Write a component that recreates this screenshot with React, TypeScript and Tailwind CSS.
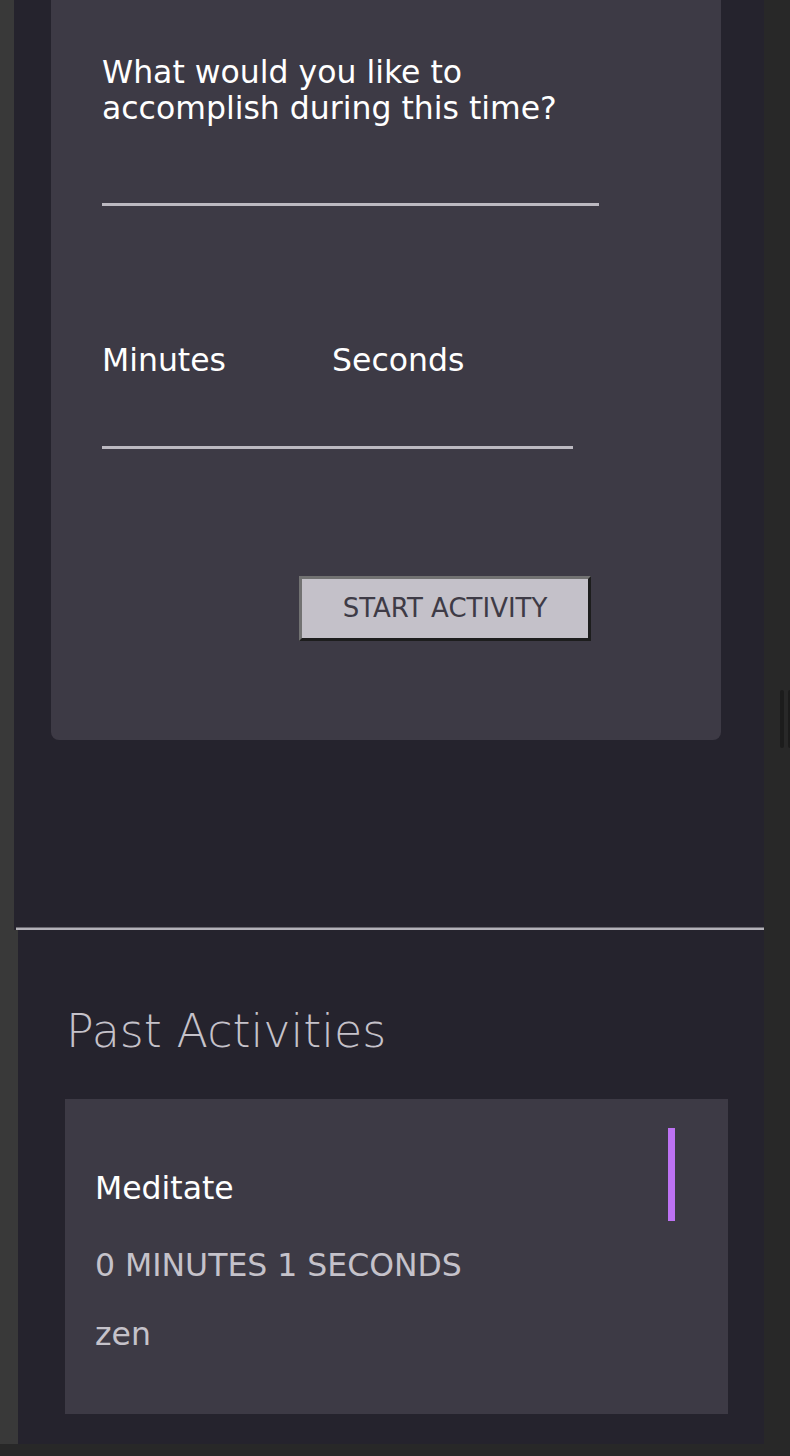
import React, { useState } from 'react';

const font = { fontFamily: '"DejaVu Sans", "Liberation Sans", sans-serif' };

const App: React.FC = () => {
  const [goal, setGoal] = useState('');
  const [minutes, setMinutes] = useState('');
  const [seconds, setSeconds] = useState('');

  return (
    <div className="h-[1456px] bg-[#282828] flex flex-col overflow-hidden" style={font}>
      <div className="flex h-[1444px]">
        {/* left gutter */}
        <div className="w-[14px] bg-[#393939]" />

        <main className="w-[750px] bg-[#25232d] flex flex-col">
          {/* New activity form */}
          <section className="h-[927px] pl-[37px]">
            <div className="w-[670px] h-[740px] bg-[#3d3a45] rounded-b-lg pl-[51px] pt-[54px]">
              <label className="block text-[31.5px] leading-[36px] text-white">
                What would you like to
                <br />
                accomplish during this time?
              </label>
              <input
                className="block mt-[36px] w-[497px] h-[44px] bg-transparent border-b-[3px] border-[#bcb9c1] outline-none text-white text-[28px]"
                value={goal}
                onChange={(e) => setGoal(e.target.value)}
              />

              <div className="flex mt-[136px]">
                <div className="w-[230px]">
                  <label className="block text-[31.5px] leading-[36px] text-white">Minutes</label>
                  <input
                    className="block mt-[27px] w-full h-[44px] bg-transparent border-b-[3px] border-[#bcb9c1] outline-none text-white text-[28px]"
                    value={minutes}
                    onChange={(e) => setMinutes(e.target.value)}
                  />
                </div>
                <div className="w-[241px]">
                  <label className="block text-[31.5px] leading-[36px] text-white">Seconds</label>
                  <input
                    className="block mt-[27px] w-full h-[44px] bg-transparent border-b-[3px] border-[#bcb9c1] outline-none text-white text-[28px]"
                    value={seconds}
                    onChange={(e) => setSeconds(e.target.value)}
                  />
                </div>
              </div>

              <button className="block mt-[127px] ml-[197px] w-[292px] h-[65px] bg-[#c4c1c9] border-[3px] border-t-[#727272] border-l-[#727272] border-b-[#1d1d1d] border-r-[#1d1d1d] text-[26px] text-[#3e3b46] uppercase">
                Start Activity
              </button>
            </div>
          </section>

          {/* divider */}
          <div className="ml-[2px] h-[3px] border-t border-[#6c6a72] bg-[#b3b1b8]" />

          {/* Past activities */}
          <section className="flex-1 border-l-4 border-[#393939] pl-[47px] pt-[73px]">
            <h2 className="text-[46px] leading-[56px] font-extralight text-[#c5c2ca] pl-px">Past Activities</h2>

            <div className="mt-[40px] w-[663px] h-[315px] bg-[#3d3a45] pl-[30px] pt-[29px]">
              <div className="flex items-start justify-between">
                <h3 className="mt-[42px] text-[31.5px] leading-[36px] text-white">Meditate</h3>
                <div className="w-[7px] h-[93px] bg-[#bd72f3] mr-[53px]" />
              </div>
              <p className="mt-[26px] text-[31.5px] leading-[36px] text-[#c5c2ca] uppercase">0 minutes 1 seconds</p>
              <p className="mt-[33px] text-[31.5px] leading-[36px] text-[#c5c2ca]">zen</p>
            </div>
          </section>
        </main>

        {/* right gutter with scrollbar thumb */}
        <div className="flex-1 bg-[#282828] relative">
          <div className="absolute left-[16px] top-[690px] w-[4px] h-[58px] rounded-full bg-[#1c1c1c]" />
          <div className="absolute left-[24px] top-[690px] w-[2px] h-[58px] rounded-l-full bg-[#1c1c1c]" />
        </div>
      </div>
    </div>
  );
};

export default App;
